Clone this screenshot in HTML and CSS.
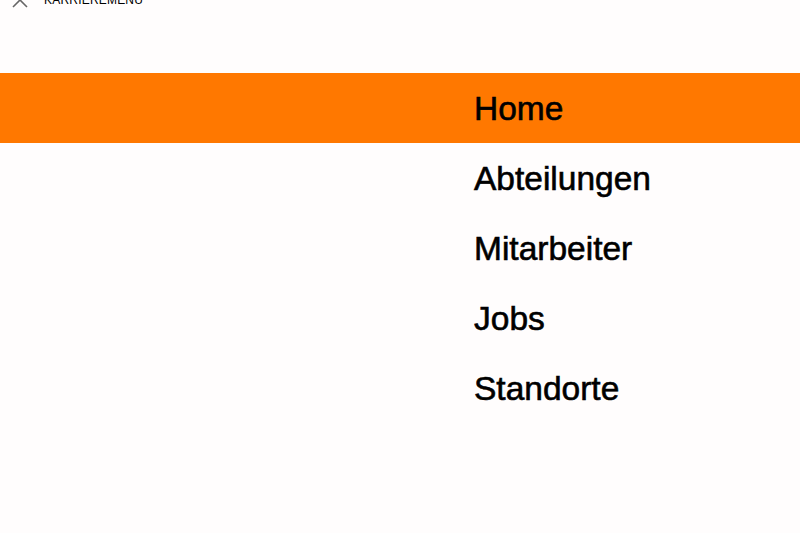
FILE: index.html
```html
<!DOCTYPE html>
<html lang="de">
<head>
    <meta charset="UTF-8">
    <meta name="viewport" content="width=device-width, initial-scale=1.0">
    <title>Karrieremenü</title>
    <link rel="stylesheet" href="styles.css">
</head>
<body>
    <div class="topbar">
        <button class="close-btn" aria-label="Schließen">
            <svg width="18" height="18" viewBox="0 0 18 18">
                <path d="M2 2 L16 16 M16 2 L2 16" stroke="#666" stroke-width="1.6" fill="none"/>
            </svg>
        </button>
        <span class="menu-title">KARRIEREMENÜ</span>
    </div>

    <nav class="career-menu">
        <a href="#" class="active">Home</a>
        <a href="#">Abteilungen</a>
        <a href="#">Mitarbeiter</a>
        <a href="#">Jobs</a>
        <a href="#">Standorte</a>
    </nav>
</body>
</html>
```

FILE: styles.css
```css
body {
    margin: 0;
    padding: 0;
    background-color: #fffdfd;
    font-family: "Liberation Sans", Arial, Helvetica, sans-serif;
    color: #000;
}
.topbar {
    display: flex;
    align-items: center;
    height: 18px;
    margin-top: -9px;
    padding-left: 11px;
}
.close-btn {
    background: none;
    border: none;
    padding: 0;
    width: 18px;
    height: 18px;
    cursor: pointer;
}
.menu-title {
    margin-left: 15px;
    font-size: 12px;
    letter-spacing: 0.2px;
}
.career-menu {
    display: flex;
    flex-direction: column;
    margin-top: 64px;
}
.career-menu a {
    display: block;
    height: 70px;
    line-height: 72px;
    padding-left: 474px;
    font-size: 33.5px;
    color: #000;
    text-decoration: none;
    -webkit-text-stroke: 0.6px #000;
}
.career-menu a.active {
    background-color: #ff7800;
}
```
